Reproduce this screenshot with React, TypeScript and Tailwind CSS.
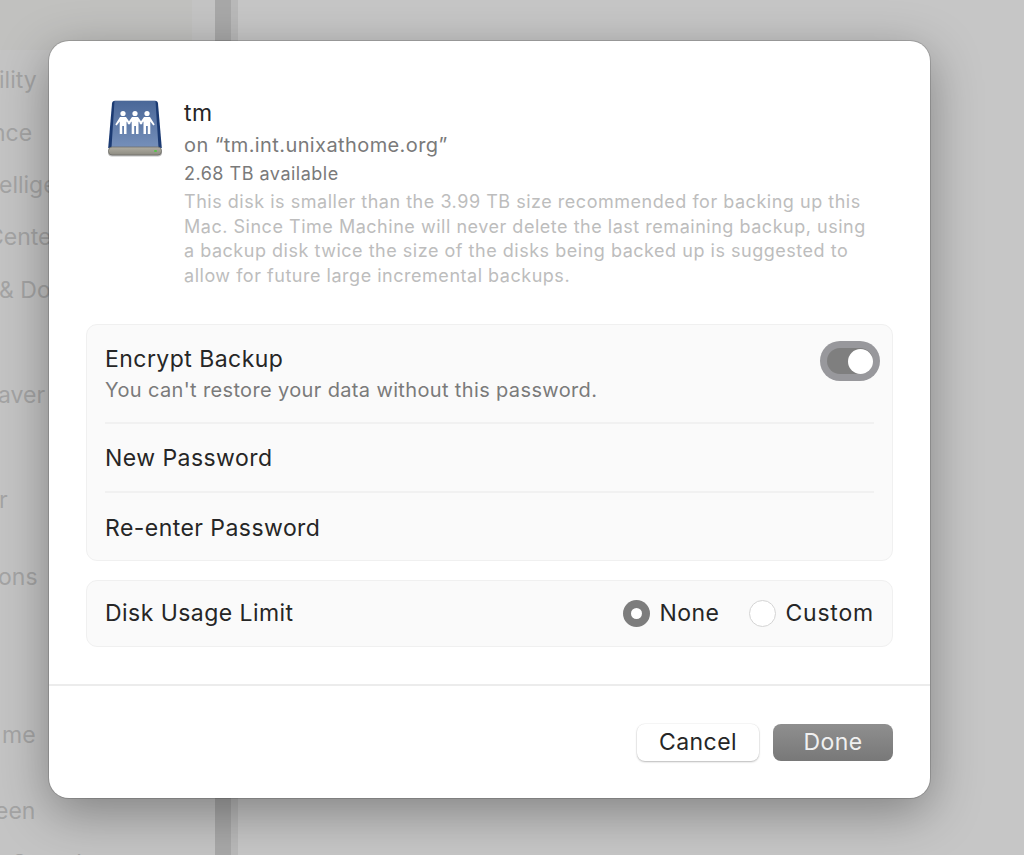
const sidebarRows: [string, string, string][] = [
  ["ility", "h-[53px]", "-ml-[1px]"],
  ["nce", "h-[52px]", "-ml-[8px]"],
  ["ellige", "h-[52px]", "-ml-[1px]"],
  ["Cente", "h-[53px]", "-ml-[13px]"],
  ["& Do", "h-[53px]", "-ml-[1px]"],
  ["", "h-[52px]", ""],
  ["aver", "h-[53px]", "-ml-[2px]"],
  ["", "h-[52px]", ""],
  ["r", "h-[53px]", "-ml-[1px]"],
  ["", "h-[24px]", ""],
  ["ons", "h-[52px]", "-ml-[2px]"],
  ["", "h-[54px]", ""],
  ["", "h-[52px]", ""],
  ["me", "h-[53px]", "ml-[2px]"],
  ["", "h-[23px]", ""],
  ["een", "h-[52px]", "-ml-[5px]"],
  ["Sound", "h-[53px]", "ml-[12px]"],
];

function DriveIcon() {
  return (
    <svg width="54" height="58" viewBox="0 0 54 58" className="shrink-0">
      <defs>
        <linearGradient id="body" x1="0" y1="0" x2="0" y2="1">
          <stop offset="0" stopColor="#4a6798" />
          <stop offset="1" stopColor="#7690ba" />
        </linearGradient>
        <linearGradient id="base" x1="0" y1="0" x2="0" y2="1">
          <stop offset="0" stopColor="#b0ada2" />
          <stop offset="1" stopColor="#8e8c82" />
        </linearGradient>
      </defs>
      <path d="M4 3.5 Q4.3 0.7 7 0.7 H47 Q49.7 0.7 50 3.5 L53.8 48 H0.2 Z" fill="#1b3a72" />
      <path d="M6.5 1 H47.5 L50.5 48 H3.5 Z" fill="url(#body)" />
      <g fill="#fff" transform="translate(-1 -1)">
        <circle cx="16" cy="14.5" r="2.6" />
        <path d="M13 18 H19 L23.5 24.5 L22.3 25.6 L19.5 22.5 V35 H17 V27 H15.2 V35 H12.7 V22.5 L9.7 26.5 L8.3 25.4 Z" />
        <circle cx="28" cy="14.5" r="2.6" />
        <path d="M25 18 H31 L35.5 24.5 L34.3 25.6 L31.5 22.5 V35 H29 V27 H27.2 V35 H24.7 V22.5 L21.7 25.6 L20.5 24.5 Z" />
        <circle cx="40" cy="14.5" r="2.6" />
        <path d="M37 18 H43 L47.7 25.4 L46.3 26.5 L43.3 22.5 V35 H40.8 V27 H39 V35 H36.5 V22.5 L33.7 25.6 L32.5 24.5 Z" />
      </g>
      <rect x="0" y="48.5" width="54" height="8" rx="4" fill="#000" opacity="0.25" />
      <rect x="0.5" y="47" width="53" height="8" rx="3.6" fill="url(#base)" stroke="#6f6f6a" strokeWidth="0.8" />
      <rect x="46" y="50" width="3" height="2" rx="1" fill="#58c24a" />
    </svg>
  );
}

function Toggle() {
  return (
    <div className="flex h-[40px] w-[60px] items-center justify-end rounded-full bg-[#98989c] p-[7px]">
      <div className="flex h-[26px] w-[46px] items-center justify-end rounded-full bg-[#7f7f7f]">
        <div className="h-[25px] w-[25px] rounded-full bg-white" />
      </div>
    </div>
  );
}

export default function App() {
  return (
    <div className="relative flex h-[855px] w-[1024px] overflow-hidden bg-[#c6c6c6] font-['Inter','Noto_Sans',sans-serif]">
      <div className="w-[215px] shrink-0 overflow-hidden bg-[#c4c4c4] text-[23px] text-[#a4a4a4]">
        <div className="mb-[4px] h-[50px] w-[192px] rounded-br-[10px] bg-[#c1c1bf]" />
        {sidebarRows.map(([label, h, offset], i) => (
          <div key={i} className={`flex items-center ${h}`}>
            <span className={`whitespace-nowrap ${offset}`}>{label}</span>
          </div>
        ))}
      </div>
      <div className="w-[16px] shrink-0 bg-[#a8a8a8]" />
      <div className="w-[7px] shrink-0 bg-[#b9b9b9]" />
      <div className="flex-1 bg-[#c6c6c6]" />

      <div className="absolute left-[49px] top-[41px] flex h-[757px] w-[881px] flex-col rounded-[20px] bg-white shadow-[0_0_0_1px_rgba(0,0,0,0.15),0_14px_50px_rgba(0,0,0,0.35)]">
        <div className="flex gap-[22px] pl-[59px] pr-[60px] pt-[59px]">
          <DriveIcon />
          <div className="-mt-[2px] min-w-0 flex-1">
            <div className="text-[23px] leading-[30px] tracking-[0.5px] text-[#262626]">tm</div>
            <div className="mt-[2px] text-[20px] leading-[30px] tracking-[0.4px] text-[#7a7a7a]">on “tm.int.unixathome.org”</div>
            <div className="text-[18px] leading-[28px] tracking-[0.5px] text-[#7a7a7a]">2.68 TB available</div>
            <div className="mt-[2px] text-[18px] leading-[24.5px] tracking-[0.52px] text-[#bdbdbd]">
              This disk is smaller than the 3.99 TB size recommended for backing up this Mac. Since Time Machine will never delete the last remaining backup, using a backup disk twice the size of the disks being backed up is suggested to allow for future large incremental backups.
            </div>
          </div>
        </div>

        <div className="mx-[37px] mt-[36px] rounded-[11px] border border-[#f0f0f0] bg-[#fafafa] px-[18px] text-[23px] tracking-[0.45px] text-[#262626]">
          <div className="flex h-[99px] items-start justify-between border-b-2 border-[#f1f1f1] pt-[18px]">
            <div>
              <div className="leading-[32px]">Encrypt Backup</div>
              <div className="text-[20px] leading-[30px] tracking-[0.36px] text-[#7a7a7a]">You can't restore your data without this password.</div>
            </div>
            <div className="-mr-[6px] -mt-[2px]">
              <Toggle />
            </div>
          </div>
          <div className="flex h-[69px] items-center border-b-2 border-[#f1f1f1] pt-[2px]">New Password</div>
          <div className="flex h-[67px] items-center pt-[3px]">Re-enter Password</div>
        </div>

        <div className="mx-[37px] mt-[19px] flex h-[67px] items-center justify-between rounded-[11px] border border-[#f0f0f0] bg-[#fafafa] px-[18px] text-[23px] tracking-[0.45px] text-[#262626]">
          <span>Disk Usage Limit</span>
          <div className="flex items-center">
            <span className="flex h-[27px] w-[27px] items-center justify-center rounded-full bg-[#7d7d7d]">
              <span className="h-[11px] w-[11px] rounded-full bg-white" />
            </span>
            <span className="ml-[9px]">None</span>
            <span className="ml-[30px] h-[27px] w-[27px] rounded-full border border-[#d4d4d4] bg-white" />
            <span className="ml-[9px] tracking-[0.8px]">Custom</span>
          </div>
        </div>

        <div className="mt-[37px] h-[2px] bg-[#ececec]" />

        <div className="mr-[37px] mt-[38px] flex justify-end gap-[14px] text-[23px] tracking-[0.45px]">
          <button className="h-[37px] w-[122px] rounded-[8px] bg-white leading-[37px] text-[#262626] shadow-[0_0_0_0.5px_rgba(0,0,0,0.06),0_1px_2px_rgba(0,0,0,0.25)]">Cancel</button>
          <button className="h-[37px] w-[120px] rounded-[8px] bg-gradient-to-b from-[#8f8f8f] to-[#787878] leading-[37px] text-[#f0f0f0]">Done</button>
        </div>
      </div>
    </div>
  );
}
